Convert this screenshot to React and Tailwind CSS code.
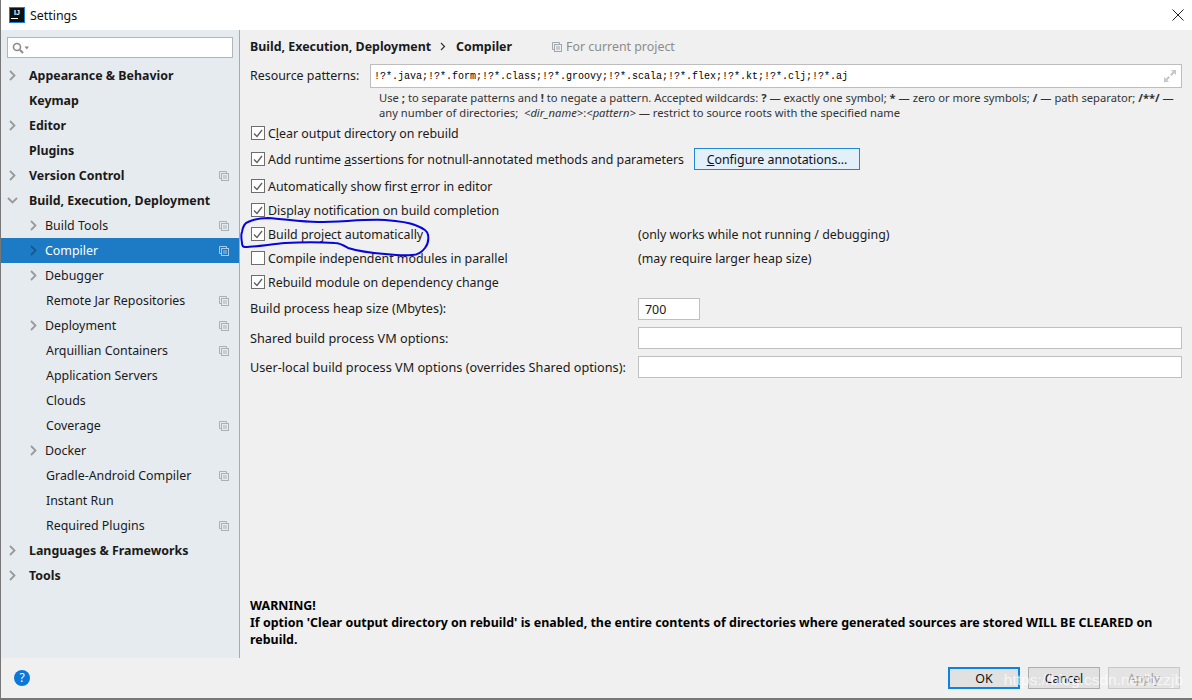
import React from 'react';

const font = 'font-["Noto_Sans","Open_Sans",sans-serif]';

// small "project level" stacked pages icon
const CopyIcon = ({ className = 'text-[#a9b1b8]' }) => (
  <svg width="10" height="10" viewBox="0 0 10 10" fill="none" stroke="currentColor" strokeWidth="1" className={className}>
    <path d="M2.5 7.5H0.5V0.5H7.5V2.5" />
    <rect x="2.5" y="2.5" width="7" height="7" />
    <path d="M4 5H8M4 7H8" />
  </svg>
);

const Chevron = ({ className = 'text-[#9a9a9a]' }) => (
  <svg width="7" height="11" viewBox="0 0 7 11" fill="none" stroke="currentColor" strokeWidth="1.8" className={className}>
    <path d="M1 1L5.5 5.5L1 10" />
  </svg>
);

const tree = [
  { label: 'Appearance & Behavior', bold: true, arrow: true },
  { label: 'Keymap', bold: true },
  { label: 'Editor', bold: true, arrow: true },
  { label: 'Plugins', bold: true },
  { label: 'Version Control', bold: true, arrow: true, copy: true },
  { label: 'Build, Execution, Deployment', bold: true, open: true },
  { label: 'Build Tools', sub: true, arrow: true, copy: true },
  { label: 'Compiler', sub: true, arrow: true, copy: true, active: true },
  { label: 'Debugger', sub: true, arrow: true },
  { label: 'Remote Jar Repositories', sub: true, copy: true },
  { label: 'Deployment', sub: true, arrow: true, copy: true },
  { label: 'Arquillian Containers', sub: true, copy: true },
  { label: 'Application Servers', sub: true },
  { label: 'Clouds', sub: true },
  { label: 'Coverage', sub: true, copy: true },
  { label: 'Docker', sub: true, arrow: true },
  { label: 'Gradle-Android Compiler', sub: true, copy: true },
  { label: 'Instant Run', sub: true },
  { label: 'Required Plugins', sub: true, copy: true },
  { label: 'Languages & Frameworks', bold: true, arrow: true },
  { label: 'Tools', bold: true, arrow: true },
];

const gutter = (item) => {
  if (!item.sub) return 'w-[28px] pr-[5px]';
  return item.arrow ? 'w-[44px] pl-[21px]' : 'w-[45px] pl-[21px]';
};

const TreeRow = ({ item }) => (
  <div className={`relative flex items-center h-[25px] pr-[10px] ${item.active ? 'bg-[#1c7bc4] text-white' : 'text-[#1a1a1a]'}`}>
    <div className={`flex items-center justify-center shrink-0 ${gutter(item)}`}>
      {item.open ? (
        <svg width="11" height="7" viewBox="0 0 11 7" fill="none" stroke="currentColor" strokeWidth="1.8" className="text-[#9a9a9a]">
          <path d="M1 1L5.5 5.5L10 1" />
        </svg>
      ) : item.arrow ? (
        <Chevron className={item.active ? 'text-[#135a92]' : 'text-[#9a9a9a]'} />
      ) : null}
    </div>
    <span className={`flex-1 text-[12.4px] whitespace-nowrap ${item.bold ? 'font-bold' : ''}`}>{item.label}</span>
    {item.copy && <CopyIcon className={item.active ? 'text-[#a9c9e4]' : 'text-[#a9b1b8]'} />}
  </div>
);

const Check = ({ checked = true }) => (
  <span className="flex items-center justify-center w-[14px] h-[14px] shrink-0 bg-white border border-[#6e6e6e]">
    {checked && (
      <svg width="10" height="9" viewBox="0 0 10 9" fill="none" stroke="#5c5c5c" strokeWidth="1.3">
        <path d="M1 4.5L4 7.5L9 1" />
      </svg>
    )}
  </span>
);

const CheckRow = ({ checked, children, note, className = 'h-[24px]' }) => (
  <div className={`flex items-center ${className}`}>
    <div className="flex items-center gap-[3px] w-[388px] pl-[1px]">
      <Check checked={checked} />
      <span className="whitespace-nowrap">{children}</span>
    </div>
    {note && <span className="whitespace-nowrap">{note}</span>}
  </div>
);

const FieldRow = ({ label, value = '', width = 'flex-1', className, labelClass = '' }) => (
  <div className={`flex items-center ${className}`}>
    <span className={`w-[388px] text-[12.7px] whitespace-nowrap ${labelClass}`}>{label}</span>
    <div className={`h-[22px] bg-white border border-[#c0c0c0] px-[6px] flex items-center ${width}`}>{value}</div>
  </div>
);

export default function App() {
  return (
    <div className={`relative w-[1192px] h-[700px] overflow-hidden flex flex-col bg-[#f0f0f0] text-[12.4px] leading-[17px] text-[#1a1a1a] border-l border-l-[#777777] ${font}`}>
      {/* title bar */}
      <header className="h-[30px] shrink-0 bg-white flex items-center pl-[8px] pr-[7px]">
        <div className="w-[16px] h-[16px] bg-[#111] border border-[#1b7fd6] flex flex-col items-center justify-start">
          <span className="text-white text-[7px] leading-[9px] font-bold font-['Liberation_Sans',sans-serif]">IJ</span>
          <span className="w-[7px] h-[1px] bg-white mt-[1px] self-start ml-[1px]" />
        </div>
        <span className="ml-[5px] text-[12.4px] text-[#111]">Settings</span>
        <svg width="12" height="12" viewBox="0 0 12 12" fill="none" stroke="#222" strokeWidth="1" className="ml-auto mr-[1px]">
          <path d="M0.5 0.5L11.5 11.5M11.5 0.5L0.5 11.5" />
        </svg>
      </header>

      <div className="flex-1 flex min-h-0">
        {/* left tree */}
        <aside className="w-[239px] shrink-0 bg-[#e6ebf0] border-r border-r-[#a9a9a9] pt-[7px]">
          <div className="mx-[6px] h-[21px] bg-white border border-[#b4b4b4] flex items-center pl-[4px] text-[#8a8a8a]">
            <svg width="18" height="12" viewBox="0 0 18 12" fill="none" stroke="currentColor">
              <circle cx="5" cy="5" r="3.5" strokeWidth="1.6" />
              <path d="M8 8L11 11" strokeWidth="2" />
              <path d="M12.5 4.5H17L14.75 7.5Z" fill="currentColor" stroke="none" />
            </svg>
          </div>
          <div className="mt-[5px]">
            {tree.map((item) => (
              <TreeRow key={item.label} item={item} />
            ))}
          </div>
        </aside>

        {/* compiler settings */}
        <main className="relative flex-1 min-w-0 flex flex-col pl-[10px] pr-[10px] pt-[8px]">
          <div className="flex items-center h-[17px]">
            <span className="font-bold">Build, Execution, Deployment</span>
            <svg width="6" height="9" viewBox="0 0 6 9" fill="none" stroke="#333" strokeWidth="1.2" className="ml-[9px] mr-[10px]">
              <path d="M1 1L4.5 4.5L1 8" />
            </svg>
            <span className="font-bold">Compiler</span>
            <span className="ml-[40px] mr-[4px]"><CopyIcon className="text-[#9fa6ac]" /></span>
            <span className="text-[#8c8c8c]">For current project</span>
          </div>

          <div className="flex items-center mt-[9px]">
            <span className="w-[120px] pb-[2px] whitespace-nowrap">Resource patterns:</span>
            <div className="flex-1 h-[24px] bg-white border border-[#bdbdbd] flex items-center pl-[3px] pr-[5px]">
              <span className="font-['Liberation_Mono',monospace] text-[10px] text-black">!?*.java;!?*.form;!?*.class;!?*.groovy;!?*.scala;!?*.flex;!?*.kt;!?*.clj;!?*.aj</span>
              <svg width="12" height="12" viewBox="0 0 12 12" fill="#c4c8cc" className="ml-auto">
                <path d="M7 0H12V5L10.3 3.3L7.5 6L6 4.5L8.7 1.7Z" />
                <path d="M5 12H0V7L1.7 8.7L4.5 6L6 7.5L3.3 10.3Z" />
              </svg>
            </div>
          </div>

          <p className="mt-[2px] ml-[129px] text-[11.2px] leading-[15px] text-[#333]">
            Use <b>;</b> to separate patterns and <b>!</b> to negate a pattern. Accepted wildcards: <b>?</b> — exactly one symbol; <b>*</b> — zero or more symbols; <b>/</b> — path separator; <b>/**/</b> — any number of directories; &nbsp;<i>&lt;dir_name&gt;</i>:<i>&lt;pattern&gt;</i> — restrict to source roots with the specified name
          </p>

          <CheckRow className="h-[24px] mt-[1px]">C<u>l</u>ear output directory on rebuild</CheckRow>
          <div className="flex items-center h-[28px]">
            <div className="flex items-center gap-[3px] pl-[1px]">
              <Check />
              <span className="whitespace-nowrap">Add runtime <u>a</u>ssertions for notnull-annotated methods and parameters</span>
            </div>
            <button className="ml-auto shrink-0 mr-[322px] w-[166px] h-[22px] bg-[#e3f0fa] border border-[#1e88d8] text-[#111]">
              <u>C</u>onfigure annotations...
            </button>
          </div>
          <CheckRow className="h-[24px] mt-[1px]">Automatically show first <u>e</u>rror in editor</CheckRow>
          <CheckRow>Display notification on build completion</CheckRow>
          <CheckRow note="(only works while not running / debugging)">Build project automatically</CheckRow>
          <CheckRow checked={false} note="(may require larger heap size)">Compile independent modules in parallel</CheckRow>
          <CheckRow>Rebuild module on dependency change</CheckRow>

          <FieldRow label="Build process heap size (Mbytes):" value="700" width="w-[62px]" className="mt-[4px]" labelClass="pb-[2px]" />
          <FieldRow label="Shared build process VM options:" className="mt-[7px]" />
          <FieldRow label="User-local build process VM options (overrides Shared options):" className="mt-[7px]" />

          <div className="mt-auto mb-[10px] font-bold text-[12.45px] leading-[17px] text-black">
            <p>WARNING!</p>
            <p>If option 'Clear output directory on rebuild' is enabled, the entire contents of directories where generated sources are stored WILL BE CLEARED on rebuild.</p>
          </div>

          {/* hand drawn circle around the option */}
          <svg width="195" height="45" viewBox="0 0 195 45" fill="none" stroke="#0505dc" strokeWidth="2" className="absolute left-[0px] top-[187px]">
            <path d="M2 26C1 20 1 17 2 15C3 9 5 6 8 5C14 2 20 1 28 1C45 2 60 5 78 5C100 5 125 2 145 3C158 4 168 5 175 8C183 11 188 14 188 18C189 23 188 27 185 31C182 35 178 38 172 38C163 39 154 38 145 37C132 36 118 34 108 31C103 28 100 26 95 26C80 25 62 25 45 26C32 27 15 30 5 30C3 30 2 28 2 26Z" />
          </svg>
        </main>
      </div>

      {/* footer */}
      <footer className="h-[42px] shrink-0 flex items-center pl-[13px] pr-[12px] border-b-[2px] border-b-[#777777] bg-[#f0f0f0]">
        <span className="w-[16px] h-[16px] rounded-full bg-[#0b78d7] text-white text-[12px] leading-[16px] text-center">?</span>
        <div className="ml-auto flex gap-[8px]">
          <button className="w-[72px] h-[22px] bg-[#e1e1e1] border-[2px] border-[#0a84e0] text-[#111]">OK</button>
          <button className="w-[72px] h-[22px] bg-[#e1e1e1] border border-[#adadad] text-[#111]">Cancel</button>
          <button className="w-[72px] h-[22px] bg-[#e4e4e4] border border-[#c8c8c8] text-[#a0a0a0]">Apply</button>
        </div>
      </footer>

      {/* watermark */}
      <span className="absolute right-[9px] bottom-[10px] font-['Liberation_Sans',sans-serif] text-[15.5px] leading-[20px] text-white/70 whitespace-nowrap pointer-events-none">https://blog.csdn.net/hzzjb</span>
    </div>
  );
}
